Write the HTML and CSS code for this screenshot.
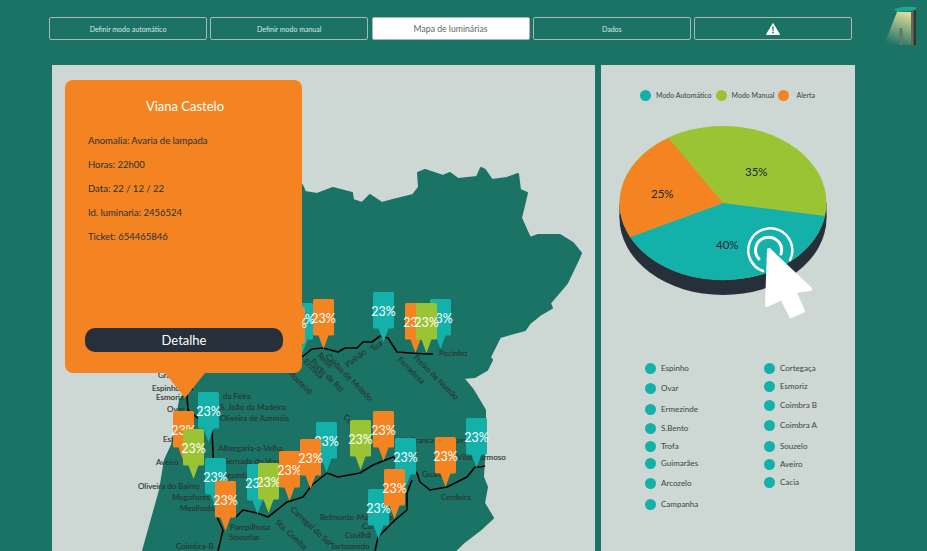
FILE: index.html
```html
<!DOCTYPE html>
<html lang="pt">
<head>
  <meta charset="UTF-8">
  <meta name="viewport" content="width=device-width, initial-scale=1.0">
  <title>Mapa de luminárias</title>
  <link rel="stylesheet" href="styles.css">
</head>
<body>

<header class="topbar">
  <nav class="nav">
    <button class="nav-btn">Definir modo automático</button>
    <button class="nav-btn">Definir modo manual</button>
    <button class="nav-btn active">Mapa de luminárias</button>
    <button class="nav-btn">Dados</button>
    <button class="nav-btn">
      <svg class="warn-icon" viewBox="0 0 14 12"><path d="M7 .5 13.6 11.6H.4Z" fill="#fff" stroke="#fff" stroke-linejoin="round"/><path d="M6.2 3.6h1.6L7.5 8h-1ZM6.2 8.8h1.6v1.5H6.2Z" fill="#1a7364"/></svg>
    </button>
  </nav>
  <svg class="lamp" viewBox="0 0 34 50">
    <defs>
      <linearGradient id="beam" x1="0.7" y1="0" x2="0.4" y2="1">
        <stop offset="0" stop-color="#dcdc98"/>
        <stop offset="1" stop-color="#dcdc98" stop-opacity="0.02"/>
      </linearGradient>
    </defs>
    <path d="M12 8H27V41H-1Z" fill="url(#beam)"/>
    <path d="M28.500 6H31V41H28.500Z" fill="#2e3437"/>
    <path d="M26 7H28.500V41H26Z" fill="#6a6650"/>
    <path d="M9 5 20 2.500 31 3V6L24 7 12 8Z" fill="#1fa594"/>
    <path d="M14.500 24h2.500l1 6-1 11h-2l-1-11Z" fill="#66786c"/>
  </svg>
</header>

<main class="content">
  <section class="map-panel">
    <svg class="map" viewBox="52 65 543 486">
      <defs>
        <path id="pin" d="M1.5 0h18A1.5 1.5 0 0 1 21 1.500v33.500A1.500 1.500 0 0 1 19.500 36.500H15.500L10.500 50 5.500 36.500H1.500A1.500 1.500 0 0 1 0 35V1.500A1.500 1.500 0 0 1 1.500 0Z"/>
      </defs>

      <path class="land" d="M143 551 160 490 165 460 172 445 180 400 185 393 190 360 230 240 302 185 305 192 317 194 333 188 352 193 353 200 362 203 370 195 382 203 393 200 413 195 419 187 418 173 425 170 443 176 450 173 458 179 477 177 481 168 485 170 492 180 507 178 518 174 520 190 527 193 521 218 530 238 538 235 560 235 573 243 581 253 578 260 567 283 550 303 552 308 540 315 530 323 525 330 500 337 490 357 492 360 487 370 475 377 463 378 473 390 485 410 485 443 483 477 487 487 484 503 493 518 480 530 463 543 455 551Z"/>

      <g class="rail">
        <path d="M302 357 312 349 323 348 338 352 345 348 357 348 363 342 372 342 380 336 388 338 397 352 410 353 427 354 433 354"/>
        <path d="M193 389 187 391 187 397 188 410 200 420 212 430 213 453 215 490 217 517 223 530 218 551"/>
        <path d="M236 517 243 510 257 513 268 517 287 502 303 497 312 485 327 473 338 477 360 473 373 465 393 457 417 473 420 482 430 490 447 487 467 477 475 467 480 467 485 466"/>
        <path d="M412 480 407 493 407 510 395 520 378 537 375 551"/>
      </g>

      <g class="place">
        <text x="158" y="378">Granja</text>
        <text x="152" y="391">Espinho</text>
        <text x="156" y="400">Esmoriz</text>
        <text x="167" y="412">Ovar</text>
        <text x="163" y="442">Estarreja</text>
        <text x="156" y="465">Aveiro</text>
        <text x="138" y="489">Oliveira do Bairro</text>
        <text x="172" y="500">Mogofores</text>
        <text x="180" y="511">Mealhada</text>
        <text x="223" y="399">da Feira</text>
        <text x="220" y="410">S. João da Madeira</text>
        <text x="220" y="421">Oliveira de Azeméis</text>
        <text x="218" y="451">Albergaria-a-Velha</text>
        <text x="224" y="464">Sernada do Vouga</text>
        <text x="222" y="478">Águeda</text>
        <text x="230" y="530">Pampilhosa</text>
        <text x="229" y="540">Souselas</text>
        <text x="176" y="549">Coimbra-B</text>
        <text x="320" y="520">Belmonte-Manteigas</text>
        <text x="362" y="529">Caria</text>
        <text x="345" y="538">Covilhã</text>
        <text x="330" y="549">Tortosendo</text>
        <text x="439" y="356">Pocinho</text>
        <text x="457" y="460">Vilar Formoso</text>
        <text x="441" y="500">Cerdeira</text>
        <text x="422" y="477">Guarda</text>
        <text x="402" y="443">V. Franca das Naves</text>
        <text transform="translate(343 417) rotate(50)">Celorico</text>
        <text transform="translate(290 510) rotate(43)">Carregal do Sal</text>
        <text transform="translate(275 523) rotate(43)">Sta. Comba</text>
        <text transform="translate(397 360) rotate(45)">Ferradosa</text>
        <text transform="translate(413 358) rotate(45)">Freixo de Numão</text>
        <text transform="translate(348 368) rotate(-39)">Pinhão</text>
        <text transform="translate(373 352) rotate(-37)">Tua</text>
        <text transform="translate(325 357) rotate(45)">Caldas de Moledo</text>
        <text transform="translate(317 356) rotate(45)">Rede</text>
        <text transform="translate(310 362) rotate(45)">Porto de Rei</text>
        <text transform="translate(303 362) rotate(45)">Ermida</text>
        <text transform="translate(287 373) rotate(45)">Mosteirô</text>
      </g>

      <g class="pins">
        <g class="teal" transform="translate(292 303)"><use href="#pin"/><text x="10.5" y="21">23%</text></g>
        <g class="orange" transform="translate(284 307)"><use href="#pin"/><text x="10.5" y="21">23%</text></g>
        <g class="orange" transform="translate(313 299)"><use href="#pin"/><text x="10.5" y="24">23%</text></g>
        <g class="teal" transform="translate(373 292)"><use href="#pin"/><text x="10.5" y="24">23%</text></g>
        <g class="teal" transform="translate(430 299)"><use href="#pin"/><text x="10.500" y="24">23%</text></g>
        <g class="orange" transform="translate(405 303)"><use href="#pin"/><text x="10.5" y="24">23%</text></g>
        <g class="green" transform="translate(416 303)"><use href="#pin"/><text x="10.5" y="24">23%</text></g>
        <g class="orange" transform="translate(173 411)"><use href="#pin"/><text x="10.5" y="24">23%</text></g>
        <g class="teal" transform="translate(198 392)"><use href="#pin"/><text x="10.5" y="24">23%</text></g>
        <g class="green" transform="translate(183 429)"><use href="#pin"/><text x="10.5" y="24">23%</text></g>
        <g class="teal" transform="translate(205 458)"><use href="#pin"/><text x="10.5" y="24">23%</text></g>
        <g class="orange" transform="translate(215 481)"><use href="#pin"/><text x="10.5" y="24">23%</text></g>
        <g class="teal" transform="translate(247 464)"><use href="#pin"/><text x="10.5" y="24">23%</text></g>
        <g class="green" transform="translate(258 463)"><use href="#pin"/><text x="10.5" y="24">23%</text></g>
        <g class="orange" transform="translate(279 451)"><use href="#pin"/><text x="10.5" y="24">23%</text></g>
        <g class="teal" transform="translate(316 422)"><use href="#pin"/><text x="10.5" y="24">23%</text></g>
        <g class="orange" transform="translate(300 439)"><use href="#pin"/><text x="10.5" y="24">23%</text></g>
        <g class="green" transform="translate(350 420)"><use href="#pin"/><text x="10.5" y="24">23%</text></g>
        <g class="orange" transform="translate(373 411)"><use href="#pin"/><text x="10.5" y="24">23%</text></g>
        <g class="teal" transform="translate(395 438)"><use href="#pin"/><text x="10.5" y="24">23%</text></g>
        <g class="orange" transform="translate(435 437)"><use href="#pin"/><text x="10.5" y="24">23%</text></g>
        <g class="teal" transform="translate(466 418)"><use href="#pin"/><text x="10.5" y="24">23%</text></g>
        <g class="teal" transform="translate(368 489)"><use href="#pin"/><text x="10.5" y="24">23%</text></g>
        <g class="orange" transform="translate(384 469)"><use href="#pin"/><text x="10.5" y="24">23%</text></g>
      </g>
    </svg>

    <!-- janela do ponto selecionado -->
    <div class="popup">
      <h2 class="popup-title">Viana Castelo</h2>
      <p>Anomalia: Avaria de lampada</p>
      <p>Horas: 22h00</p>
      <p>Data: 22 / 12 / 22</p>
      <p>Id. luminaria: 2456524</p>
      <p>Ticket: 654465846</p>
      <button class="detail-btn">Detalhe</button>
    </div>
  </section>

  <aside class="side-panel">
    <ul class="legend">
      <li><span class="dot"></span>Modo Automático</li>
      <li><span class="dot green-bg"></span>Modo Manual</li>
      <li class="legend-alert"><span class="dot orange-bg"></span>Alerta</li>
    </ul>

    <svg class="pie" viewBox="0 0 254 212">
      <ellipse cx="122" cy="102" rx="103.500" ry="77" fill="#262f3a"/>
      <path d="M18.500 87V102H225.500V87Z" fill="#262f3a"/>
      <ellipse cx="122" cy="87" rx="103.500" ry="77" fill="#9bc435"/>
      <path d="M122 87 29 121A103.500 77 0 0 0 224 100Z" fill="#14b1aa"/>
      <path d="M122 87 67.500 22A103.500 77 0 0 0 29 121Z" fill="#f48421"/>
      <text x="144" y="60">35%</text>
      <text x="50" y="82">25%</text>
      <text x="115" y="133">40%</text>
      <g fill="none" stroke="#fff" stroke-linecap="round">
        <path d="M162 155A22 22 0 1 1 189 144" stroke-width="2.500"/>
        <path d="M158 143A13 13 0 1 1 180 138" stroke-width="3"/>
      </g>
      <path d="M168 134 166 189 181 182 190 200 202 195 193 175 209 173Z" fill="#fff" stroke="#fff" stroke-width="4" stroke-linejoin="round"/>
    </svg>

    <div class="stations">
      <ul class="station-col">
        <li class="h20"><span class="dot"></span>Espinho</li>
        <li class="h21"><span class="dot"></span>Ovar</li>
        <li class="h19"><span class="dot"></span>Ermezinde</li>
        <li class="h18"><span class="dot"></span>S.Bento</li>
        <li class="h17"><span class="dot"></span>Trofa</li>
        <li class="h20"><span class="dot"></span>Guimarães</li>
        <li class="h21"><span class="dot"></span>Arcozelo</li>
        <li class="h20"><span class="dot"></span>Campanha</li>
      </ul>
      <ul class="station-col">
        <li class="h18"><span class="dot"></span>Cortegaça</li>
        <li class="h19"><span class="dot"></span>Esmoriz</li>
        <li class="h20"><span class="dot"></span>Coimbra B</li>
        <li class="h21"><span class="dot"></span>Coimbra A</li>
        <li class="h18"><span class="dot"></span>Souzelo</li>
        <li class="h18"><span class="dot"></span>Aveiro</li>
        <li class="h18"><span class="dot"></span>Cacia</li>
      </ul>
    </div>
  </aside>
</main>

</body>
</html>
```

FILE: styles.css
```css
* {
  box-sizing: border-box;
}
body {
  margin: 0;
  height: 551px;
  overflow: hidden;
  background-color: #1a7364;
  font-family: "Lato", "Open Sans", sans-serif;
}
ul {
  list-style: none;
  margin: 0;
  padding: 0;
}

/* barra de cima */
.topbar {
  display: flex;
  height: 65px;
  padding: 17px 0 0 49px;
}
.nav {
  display: flex;
  gap: 3.25px;
  height: 23px;
}
.nav-btn {
  display: flex;
  align-items: center;
  justify-content: center;
  width: 158px;
  height: 23px;
  padding: 0;
  border: 1.5px solid #a7b9b2;
  border-radius: 2px;
  background: transparent;
  color: #dfe8e4;
  font-family: inherit;
  font-size: 7px;
}
.nav-btn.active {
  background-color: #fff;
  color: #666;
  font-size: 8.7px;
}
.warn-icon {
  width: 14px;
  height: 12px;
}
.lamp {
  width: 34px;
  height: 50px;
  margin: -13px 0 0 33px;
}

/* area principal */
.content {
  display: flex;
  gap: 6px;
  padding-left: 52px;
}
.map-panel {
  position: relative;
  width: 543px;
  height: 486px;
  background-color: #cdd7d3;
}
.map {
  display: block;
  width: 543px;
  height: 486px;
}
.land {
  fill: #1a7364;
  stroke: #1a7364;
  stroke-width: 2;
  stroke-linejoin: round;
}
.rail path {
  fill: none;
  stroke: #000;
  stroke-width: 1.6;
  stroke-linejoin: round;
}
.place text {
  fill: #2c3634;
  stroke: #2c3634;
  stroke-width: 0.15;
  font-size: 8px;
}
.pins text {
  fill: #fff;
  font-size: 12.5px;
  text-anchor: middle;
}
.teal {
  fill: #14b1aa;
}
.green {
  fill: #9bc435;
}
.orange {
  fill: #f48421;
}

.popup {
  position: absolute;
  left: 13px;
  top: 15px;
  display: flex;
  flex-direction: column;
  width: 237px;
  height: 293px;
  padding: 17px 20px 21px 23px;
  border-radius: 8px;
  background-color: #f48421;
  color: #262f3a;
  font-size: 9.5px;
}
.popup::after {
  content: "";
  position: absolute;
  left: 100px;
  top: 293px;
  border-left: 20px solid transparent;
  border-right: 20px solid transparent;
  border-top: 25px solid #f48421;
}
.popup-title {
  margin: 0 0 20px;
  color: #fff;
  font-size: 13px;
  font-weight: 400;
  line-height: 18px;
  text-align: center;
}
.popup p {
  margin: 0 0 12px;
  line-height: 12px;
}
.detail-btn {
  width: 198px;
  height: 24px;
  margin: auto 0 0 -3px;
  padding: 0;
  border: 0;
  border-radius: 10px;
  background-color: #262f3a;
  color: #fff;
  font-family: inherit;
  font-size: 13px;
}

/* painel da direita */
.side-panel {
  width: 254px;
  height: 486px;
  background-color: #cdd7d3;
  color: #3d4442;
}
.legend {
  display: flex;
  gap: 4px;
  padding: 24px 0 0 39px;
  font-size: 7px;
}
.legend li {
  display: flex;
  align-items: center;
  gap: 5px;
  height: 12px;
}
.legend .legend-alert {
  gap: 7px;
}
.dot {
  flex: none;
  width: 11px;
  height: 11px;
  border-radius: 50%;
  background-color: #14b1aa;
}
.green-bg {
  background-color: #9bc435;
}
.orange-bg {
  background-color: #f48421;
}
.pie {
  display: block;
  width: 254px;
  height: 212px;
  margin-top: 15px;
}
.pie text {
  fill: #1c2530;
  font-size: 11.5px;
}
.stations {
  display: flex;
  padding: 35px 0 0 44px;
  font-size: 8px;
}
.station-col {
  flex: none;
  width: 119px;
}
.station-col li {
  display: flex;
  align-items: flex-start;
  gap: 5px;
  line-height: 11px;
}
.h17 { height: 17px; }
.h18 { height: 18px; }
.h19 { height: 19px; }
.h20 { height: 20px; }
.h21 { height: 21px; }
```
